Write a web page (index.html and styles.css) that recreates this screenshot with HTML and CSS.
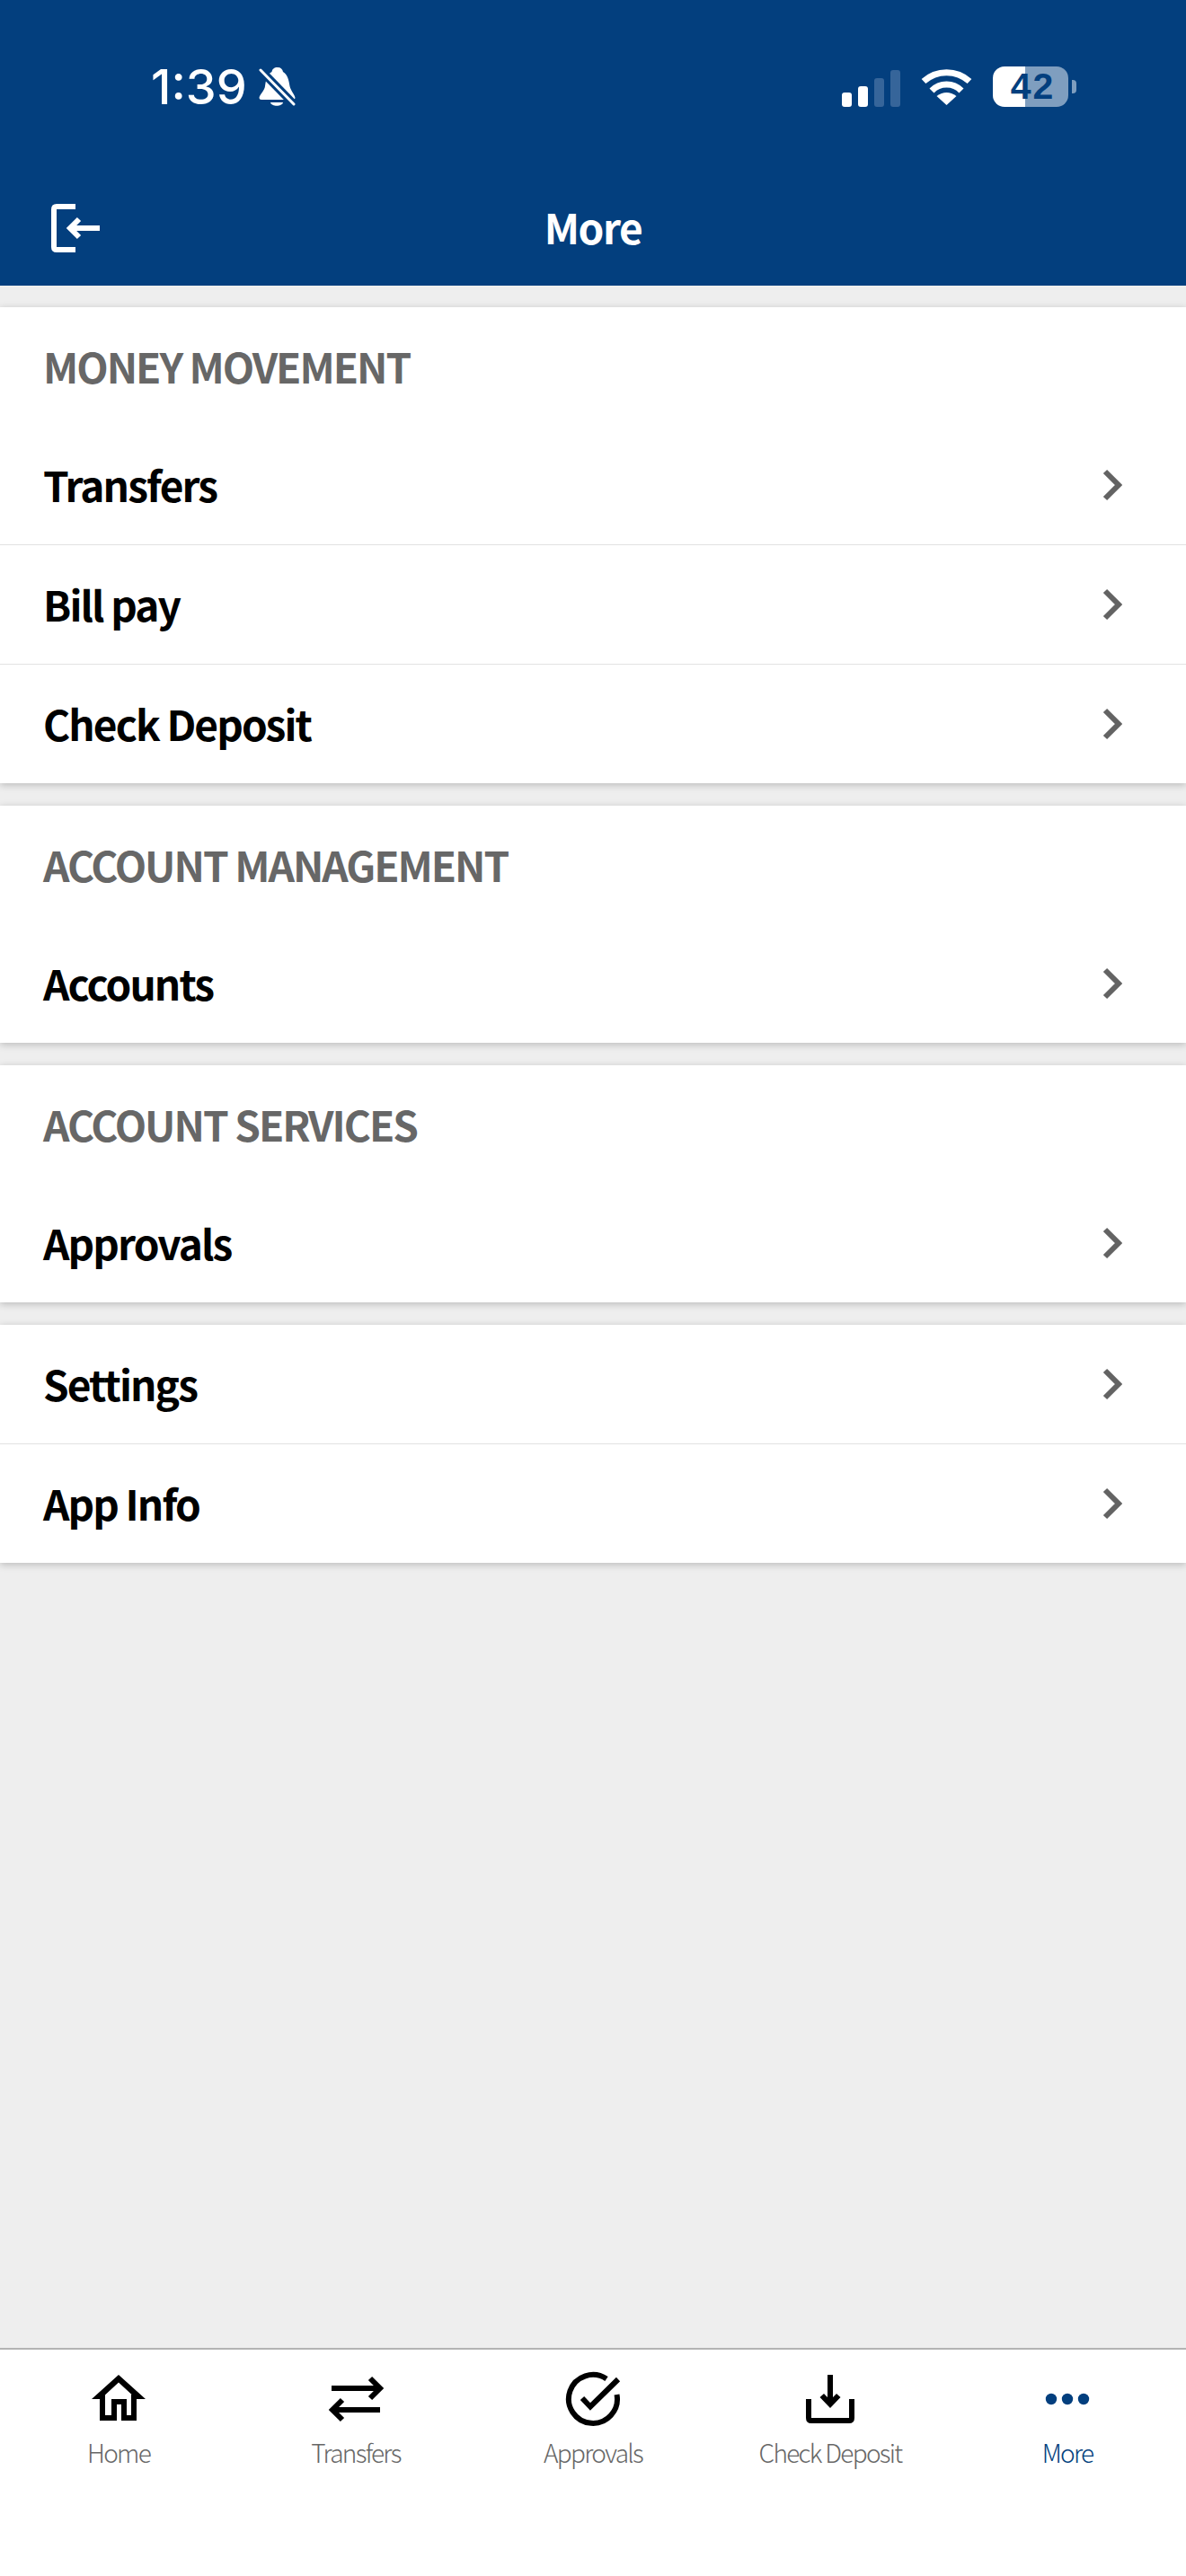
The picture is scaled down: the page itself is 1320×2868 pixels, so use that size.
FILE: index.html
```html
<!DOCTYPE html>
<html lang="en">
<head>
  <meta charset="UTF-8" />
  <meta name="viewport" content="width=device-width, initial-scale=1.0" />
  <title>More</title>
  <link rel="stylesheet" href="styles.css">
</head>
<body>
  <div class="app">
    <header class="topbar">
      <div class="status">
        <div class="status-left">
          <span class="time">1:39</span>
          <svg class="bell" viewBox="0 0 41 45">
            <path fill="#fff" d="M21 1C17 1 15 3 14.5 6C9 9 8 15 7 22C6.5 27 1 31 .5 35Q.5 37 3 37H38Q40.5 37 40.5 35C40 31 35.5 27 34.5 22C33.5 15 32 9 27 6C26.5 3 24.5 1 21 1Z"/>
            <path fill="#fff" d="M13 40H27C26 45 14 45 13 40Z"/>
            <path stroke="#033f7e" stroke-width="9" d="M2 4L39 42"/>
            <path stroke="#fff" stroke-width="3" stroke-linecap="round" d="M2 4L39 42"/>
          </svg>
        </div>
        <div class="status-right">
          <div class="signal">
            <span class="bar b1"></span>
            <span class="bar b2"></span>
            <span class="bar b3 off"></span>
            <span class="bar b4 off"></span>
          </div>
          <svg class="wifi" viewBox="0 0 57 42" fill="none" stroke="#fff" stroke-width="7">
            <path d="M3 15.5A38 38 0 0 1 54 15.5"/>
            <path d="M12 26A23 23 0 0 1 45 26"/>
            <path fill="#fff" stroke="none" d="M28.5 42L17.5 32Q28.5 24 39.5 32Z"/>
          </svg>
          <div class="battery">
            <div class="cell">42</div>
            <div class="nub"></div>
          </div>
        </div>
      </div>
      <div class="navrow">
        <a class="back" href="#">
          <svg class="logout" viewBox="0 0 54 54" fill="none" stroke="#fff" stroke-width="6">
            <path d="M27 3H6Q3 3 3 6V48Q3 51 6 51H27"/>
            <path d="M20 27H54"/>
            <path d="M31 17L21 27L31 37"/>
          </svg>
        </a>
        <h1 class="title">More</h1>
        <span></span>
      </div>
    </header>

    <main class="main">
      <section class="card">
        <h2 class="heading">MONEY MOVEMENT</h2>
        <a class="row" href="#"><span>Transfers</span><svg class="chev" viewBox="0 0 22 36"><path d="M3 3L18 18L3 33"/></svg></a>
        <a class="row" href="#"><span>Bill pay</span><svg class="chev" viewBox="0 0 22 36"><path d="M3 3L18 18L3 33"/></svg></a>
        <a class="row" href="#"><span>Check Deposit</span><svg class="chev" viewBox="0 0 22 36"><path d="M3 3L18 18L3 33"/></svg></a>
      </section>
      <section class="card">
        <h2 class="heading">ACCOUNT MANAGEMENT</h2>
        <a class="row" href="#"><span>Accounts</span><svg class="chev" viewBox="0 0 22 36"><path d="M3 3L18 18L3 33"/></svg></a>
      </section>
      <section class="card">
        <h2 class="heading">ACCOUNT SERVICES</h2>
        <a class="row" href="#"><span>Approvals</span><svg class="chev" viewBox="0 0 22 36"><path d="M3 3L18 18L3 33"/></svg></a>
      </section>
      <section class="card">
        <a class="row" href="#"><span>Settings</span><svg class="chev" viewBox="0 0 22 36"><path d="M3 3L18 18L3 33"/></svg></a>
        <a class="row" href="#"><span>App Info</span><svg class="chev" viewBox="0 0 22 36"><path d="M3 3L18 18L3 33"/></svg></a>
      </section>
    </main>

    <nav class="tabs">
      <a class="tab" href="#">
        <svg class="tab-icon" viewBox="0 0 66 66">
          <path fill="#000" d="M33 6L63 33H53L33 14.500L13 33H3Z"/>
          <path fill="none" stroke="#000" stroke-width="6" d="M15 28V54H28V36H39V54H50V28"/>
        </svg>
        <span>Home</span>
      </a>
      <a class="tab" href="#">
        <svg class="tab-icon" viewBox="0 0 66 66" fill="none" stroke="#000" stroke-width="6">
          <path d="M6 21H58"/>
          <path d="M49 10L60 21L49 32"/>
          <path d="M8 45H60"/>
          <path d="M18 34L7 45L18 56"/>
        </svg>
        <span>Transfers</span>
      </a>
      <a class="tab" href="#">
        <svg class="tab-icon" viewBox="0 0 66 66" fill="none" stroke="#000" stroke-width="6">
          <path d="M48 10.500A27 27 0 1 0 59.500 28"/>
          <path d="M21 32L30 41.500L61 11"/>
        </svg>
        <span>Approvals</span>
      </a>
      <a class="tab" href="#">
        <svg class="tab-icon" viewBox="0 0 66 66" fill="none" stroke="#000" stroke-width="6">
          <path d="M33 6V40"/>
          <path fill="#000" stroke="none" d="M21.500 31L33 43L44.500 31L40 27L33 34L26 27Z"/>
          <path d="M9 33V54Q9 57 12 57H54Q57 57 57 54V33"/>
        </svg>
        <span>Check Deposit</span>
      </a>
      <a class="tab active" href="#">
        <svg class="tab-icon" viewBox="0 0 66 66" fill="#033f7e">
          <circle cx="15" cy="33" r="6.200"/>
          <circle cx="33" cy="33" r="6.200"/>
          <circle cx="51" cy="33" r="6.200"/>
        </svg>
        <span>More</span>
      </a>
    </nav>
  </div>
</body>
</html>
```

FILE: styles.css
```css
body {
  margin: 0;
  padding: 0;
  background-color: #eeeeee;
  font-family: "Noto Sans CJK SC", "Noto Sans", sans-serif;
}
a {
  text-decoration: none;
  color: inherit;
}
.app {
  display: flex;
  flex-direction: column;
  min-height: 2868px;
}

/* top bar */
.topbar {
  height: 318px;
  box-sizing: border-box;
  background-color: #033f7e;
  color: #fff;
  display: flex;
  flex-direction: column;
}
.status {
  height: 195px;
  box-sizing: border-box;
  padding: 74px 122px 0 168px;
  display: flex;
  justify-content: space-between;
  align-items: flex-start;
}
.status-left {
  display: flex;
  align-items: center;
  gap: 13px;
  height: 45px;
}
.time {
  font-family: Inter, sans-serif;
  font-size: 54px;
  font-weight: 500;
  line-height: 45px;
}
.bell {
  width: 41px;
  height: 45px;
}
.status-right {
  display: flex;
  align-items: flex-end;
  gap: 23px;
  height: 45px;
}
.signal {
  display: flex;
  align-items: flex-end;
  gap: 7px;
  height: 43px;
}
.bar {
  width: 11px;
  border-radius: 3px;
  background-color: #fff;
}
.bar.b1 { height: 16px; }
.bar.b2 { height: 23px; }
.bar.b3 { height: 32px; }
.bar.b4 { height: 41px; }
.bar.off { background-color: #36659a; }
.wifi {
  width: 57px;
  height: 42px;
  margin-bottom: 2px;
}
.battery {
  display: flex;
  align-items: center;
  gap: 4px;
  height: 45px;
}
.cell {
  width: 84px;
  height: 45px;
  box-sizing: border-box;
  padding-left: 5px;
  border-radius: 13px;
  background: linear-gradient(90deg, #fff 36px, #7f9ebf 36px);
  color: #033f7e;
  font-family: "Liberation Sans", sans-serif;
  font-weight: bold;
  font-size: 41px;
  line-height: 45px;
  letter-spacing: 2px;
  text-align: center;
}
.nub {
  width: 5px;
  height: 15px;
  border-radius: 0 4px 4px 0;
  background-color: #7f9ebf;
}
.navrow {
  display: grid;
  grid-template-columns: 1fr auto 1fr;
  align-items: center;
  padding: 0 57px;
  height: 54px;
  margin-top: 30px;
}
.back {
  display: flex;
}
.logout {
  width: 54px;
  height: 54px;
}
.title {
  margin: 0 0 3px;
  font-size: 46px;
  font-weight: 700;
  line-height: 54px;
  letter-spacing: -1.5px;
}

/* list */
.main {
  flex-grow: 1;
  padding-top: 24px;
  display: flex;
  flex-direction: column;
  gap: 25px;
}
.card {
  background-color: #fff;
  box-shadow: 0 2px 8px rgba(0, 0, 0, 0.22);
}
.heading {
  margin: 0;
  height: 132px;
  box-sizing: border-box;
  padding: 0 48px 3px;
  display: flex;
  align-items: center;
  font-size: 46px;
  font-weight: 700;
  color: #676767;
  letter-spacing: -2px;
}
.row {
  height: 132px;
  box-sizing: border-box;
  padding: 0 71px 0 48px;
  display: flex;
  align-items: center;
  justify-content: space-between;
  font-size: 46px;
  font-weight: 700;
  letter-spacing: -1.9px;
  color: #000;
}
.row span {
  margin-bottom: 3px;
}
.row + .row {
  border-top: 1px solid #e2e2e2;
  height: 133px;
}
.chev {
  width: 22px;
  height: 36px;
  fill: none;
  stroke: #636363;
  stroke-width: 6;
}

/* bottom tabs */
.tabs {
  height: 254px;
  box-sizing: border-box;
  border-top: 2px solid #b3b3b3;
  background-color: #fff;
  display: flex;
}
.tab {
  flex: 1;
  display: flex;
  flex-direction: column;
  align-items: center;
  padding-top: 22px;
  font-size: 28px;
  line-height: 44px;
  font-weight: 300;
  letter-spacing: -1.7px;
  color: #676767;
}
.tab.active {
  color: #033f7e;
}
.tab-icon {
  width: 66px;
  height: 66px;
  margin-bottom: 4px;
}
```
